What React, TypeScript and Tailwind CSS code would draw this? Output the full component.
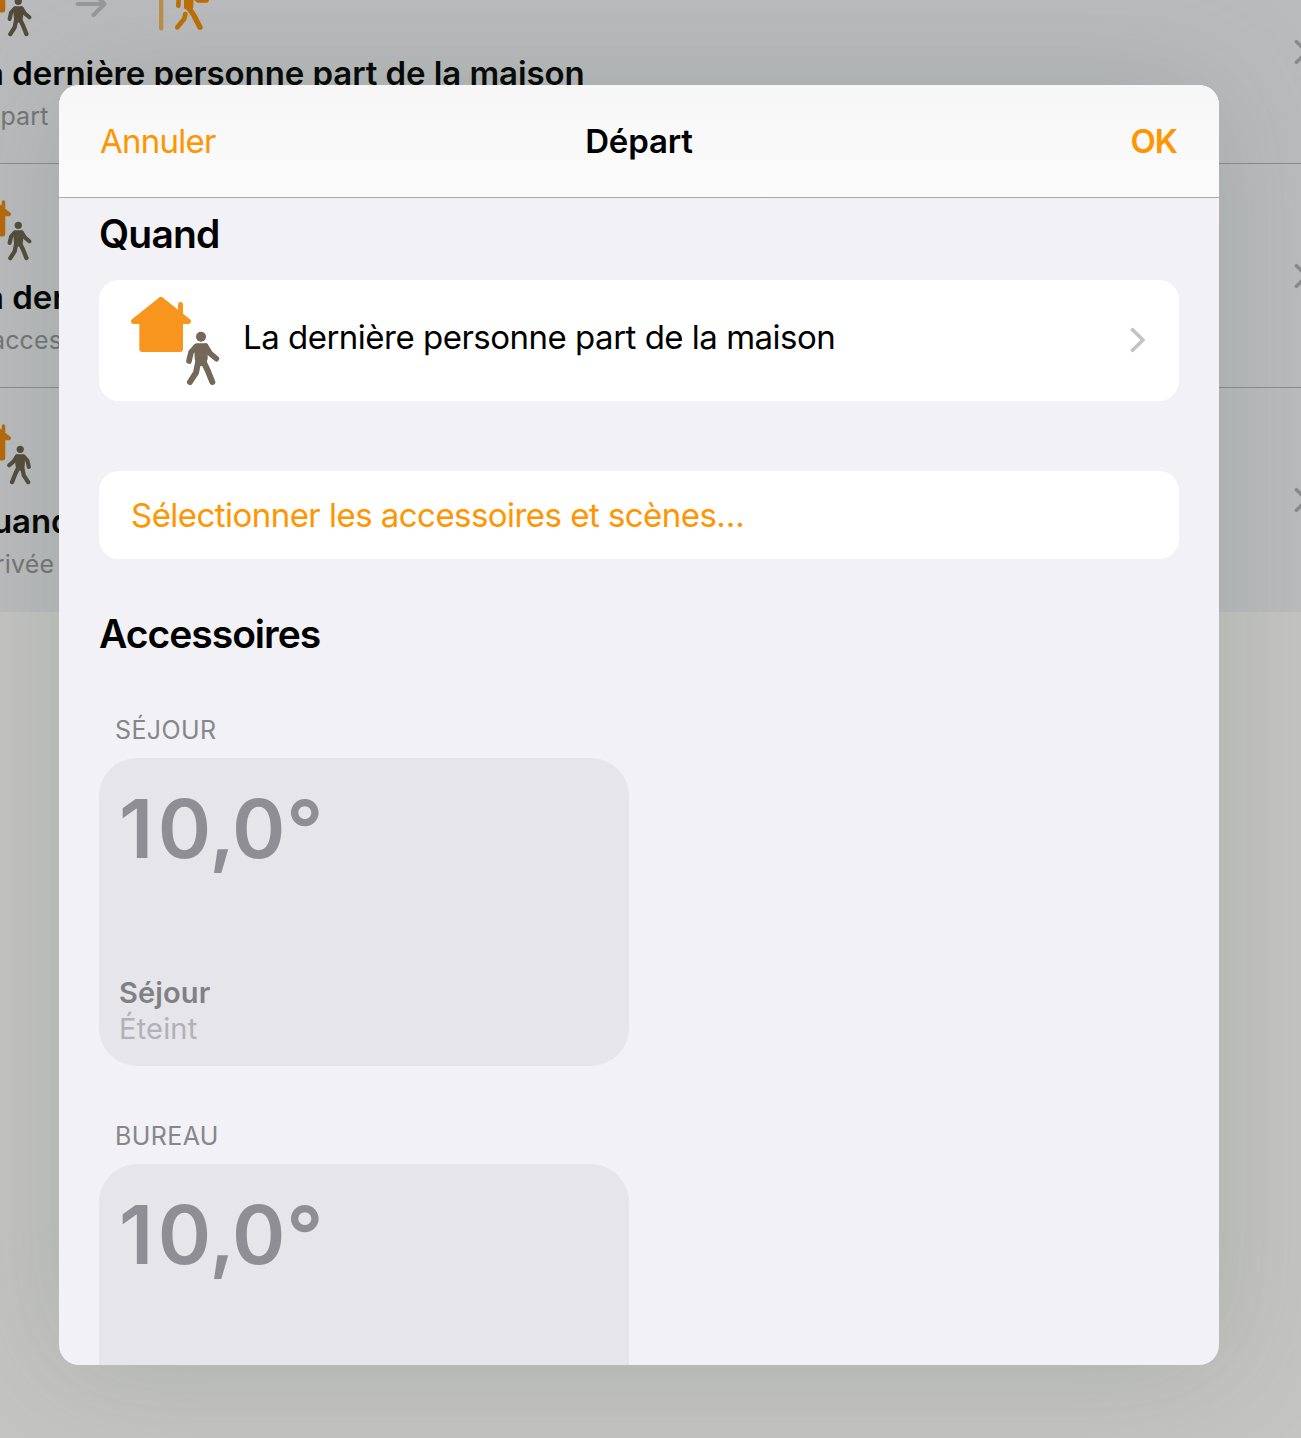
type IconTone = "bright" | "dim";

function Person({ x, mirrored = false, fill }: { x: number; mirrored?: boolean; fill: string }) {
  return (
    <g transform={mirrored ? `translate(${x} 0) scale(-1 1)` : undefined} fill={fill} stroke={fill} strokeLinejoin="round" strokeLinecap="round">
      <circle cx="273" cy="170" r="15" stroke="none" />
      <path d="M260 197 L287 197 L286 236 L280 251 L266 251 L261 236 Z" strokeWidth="14" />
      <path d="M258 200 L243 217 L237 243" fill="none" strokeWidth="17" />
      <path d="M287 199 L301 221 L319 236" fill="none" strokeWidth="17" />
      <path d="M265 244 L258 278 L240 306" fill="none" strokeWidth="18" />
      <path d="M280 244 L293 271 L307 306" fill="none" strokeWidth="18" />
    </g>
  );
}

function HomePersonIcon({ tone, mirrored = false, className }: { tone: IconTone; mirrored?: boolean; className: string }) {
  const house = tone === "bright" ? "#f8951f" : "#b66a09";
  const person = tone === "bright" ? "#746859" : "#534c3c";
  return (
    <svg viewBox="60 48 270 270" className={className} aria-hidden="true">
      <g fill={house}>
        <path d="M146 54 Q153 47 160 54 L204 89 V73 Q204 66 211.500 66 Q219 66 219 73 V101 L240 118 Q244 121 243 126 Q241 132 235 132 H219 V207 Q219 216 210 216 H97 Q88 216 88 207 V132 H72 Q65 132 63 126 Q62 121 66 118 Z" />
      </g>
      <Person fill={person} mirrored={mirrored} x={554} />
    </svg>
  );
}

function ArrowIcon() {
  return (
    <svg viewBox="0 0 34 28" className="ml-[42.500px] h-7 w-[34px] shrink-0" fill="none" stroke="#97989a" strokeWidth="4" strokeLinecap="round" strokeLinejoin="round" aria-hidden="true">
      <path d="M3.500 14 H30 M19.500 3 L30.500 14 L19.500 25" />
    </svg>
  );
}

function LeavingIcon() {
  return (
    <svg viewBox="450 -84 210 195" className="ml-[42px] h-[65px] w-[70px] shrink-0" fill="none" strokeLinecap="round" strokeLinejoin="round" aria-hidden="true">
      <path d="M483.500 -70 V85" stroke="#bd8e4c" strokeWidth="13" />
      <g stroke="#be6e05">
        <circle cx="566" cy="-52" r="16" fill="#be6e05" stroke="none" />
        <path d="M560 -22 L573 -22 L572 20 L560 20 Z" fill="#be6e05" strokeWidth="16" />
        <path d="M552 -18 L536 -2 L535 17" strokeWidth="14" />
        <path d="M575 -16 L594 1 L620 1" strokeWidth="14" />
        <path d="M563 20 L581 45 L600 82" strokeWidth="16" />
        <path d="M556 42 L553 56 L532 82" strokeWidth="14" />
      </g>
    </svg>
  );
}

function Chevron({ className, color }: { className: string; color: string }) {
  return (
    <svg viewBox="0 0 16 26" className={className} fill="none" stroke={color} strokeWidth="3.7" strokeLinecap="round" strokeLinejoin="round" aria-hidden="true">
      <path d="M2.500 2.700 L13 13 L2.500 23.300" />
    </svg>
  );
}

function AutomationRow({ title, subtitle, leaving = false, mirrored = false }: { title: string; subtitle: string; leaving?: boolean; mirrored?: boolean }) {
  return (
    <div className="flex h-56 shrink-0 items-center border-b border-[#8b8d8e] bg-[#babbbd] last:border-b-0">
      <div className="-ml-[33.500px] flex h-full flex-1 flex-col pt-[31.500px]">
        <div className="flex h-[65px] items-center">
          <HomePersonIcon tone="dim" mirrored={mirrored} className="h-[65px] w-[65px] shrink-0" />
          {leaving && <ArrowIcon />}
          {leaving && <LeavingIcon />}
        </div>
        <p className="mt-[16.500px] text-[33px] leading-10 font-semibold tracking-[-0.08px] whitespace-nowrap text-[#020301]">{title}</p>
        <p className="mt-[7px] ml-px text-[25px] leading-8 tracking-[0.15px] whitespace-nowrap text-[#737576]">{subtitle}</p>
      </div>
      <Chevron color="#898b8c" className="-mr-[9px] h-[26px] w-4 shrink-0" />
    </div>
  );
}

function Accessory({ room, className = "" }: { room: string; className?: string }) {
  return (
    <section className={className}>
      <h3 className="ml-4 text-[25px] leading-8 tracking-[0.4px] text-[#86868b]">{room}</h3>
      <div className="mt-3 flex h-[308px] w-[530px] flex-col rounded-[38px] bg-[#e5e5ea] px-5 pt-[26px] pb-[19px]">
        <p className="text-[81px] leading-[90px] font-semibold tracking-[0.8px] text-[#8f8e94]">
          <span className="tracking-[4.5px]">1</span>
          <span className="tracking-[-2px]">0</span>
          <span className="tracking-[-3px]">,</span>0°
        </p>
        <p className="mt-auto text-[29px] leading-9 font-semibold tracking-[0.15px] text-[#808085]">Séjour</p>
        <p className="text-[29px] leading-9 tracking-[0.2px] text-[#b2b1b7]">Éteint</p>
      </div>
    </section>
  );
}

export default function App() {
  return (
    <div className="relative h-[1438px] w-[1301px] overflow-hidden bg-[#c4c4c2] font-['Inter',sans-serif]">
      <main className="-mt-[60px] flex flex-col">
        <AutomationRow title="La dernière personne part de la maison" subtitle="Départ" leaving />
        <AutomationRow title="La dernière personne part de la maison" subtitle="4 accessoires" />
        <AutomationRow title="Quand une personne arrive" subtitle="Arrivée" mirrored />
      </main>

      <div role="dialog" className="absolute top-[85px] left-[59px] flex h-[1280px] w-[1160px] flex-col overflow-hidden rounded-[20px] bg-[#f1f1f6] shadow-[0_0_120px_rgba(78,98,78,0.21)]">
        <header className="grid h-[113px] shrink-0 grid-cols-3 items-center border-b border-[#a8a9ab] bg-linear-to-b from-[#f7f7f8] to-[#fbfbfc] px-[41px] text-[33px] leading-10">
          <button className="justify-self-start tracking-[-0.75px] text-[#ff9500]">Annuler</button>
          <h1 className="justify-self-center font-semibold tracking-[-0.15px] text-black">Départ</h1>
          <button className="mr-px justify-self-end font-semibold tracking-[-1px] text-[#ff9500]">OK</button>
        </header>

        <div className="flex-1 overflow-hidden px-10">
          <h2 className="mt-3 text-[39px] leading-[48px] font-semibold tracking-[-0.8px] text-black">Quand</h2>
          <div className="mt-[22px] flex h-[121px] items-center rounded-[20px] bg-white pr-[33px] pl-[31px]">
            <HomePersonIcon tone="bright" className="h-[90px] w-[90px] shrink-0" />
            <p className="ml-[23px] flex-1 pb-[7px] text-[33px] leading-10 tracking-[-0.5px] text-black">La dernière personne part de la maison</p>
            <Chevron color="#c4c4c7" className="mb-px h-[26px] w-4 shrink-0" />
          </div>
          <button className="mt-[70px] flex h-[88px] w-full items-center rounded-[20px] bg-white px-8 pt-0.5 text-[33px] tracking-[-0.54px] text-[#ff9500]">
            Sélectionner les accessoires et scènes…
          </button>
          <h2 className="mt-[51px] text-[39px] leading-[48px] font-semibold tracking-[-1px] text-black">Accessoires</h2>
          <Accessory room="SÉJOUR" className="mt-14" />
          <Accessory room="BUREAU" className="mt-[54px]" />
        </div>
      </div>
    </div>
  );
}
